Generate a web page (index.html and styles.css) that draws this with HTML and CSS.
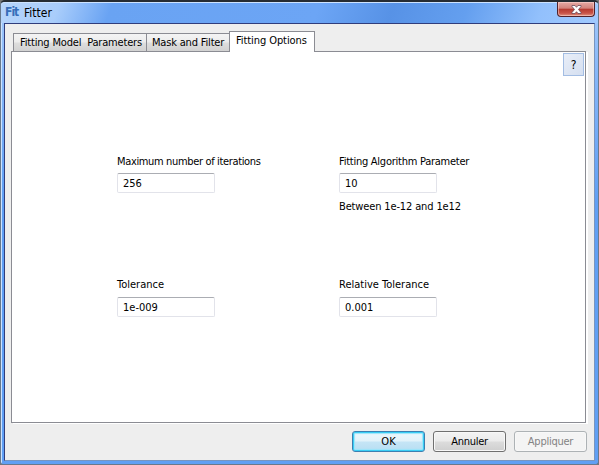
FILE: index.html
```html
<!DOCTYPE html>
<html lang="en">
<head>
<meta charset="utf-8">
<title>Fitter</title>
<link rel="stylesheet" href="styles.css">
</head>
<body>
<div class="window">
  <header class="titlebar">
    <span class="logo">Fit</span>
    <span class="title">Fitter</span>
    <button class="close" aria-label="Close">
      <svg width="11" height="9" viewBox="0 0 11 9"><path d="M1 .5h3L5.500 2.300 7 .5h3v1L7.500 4.500 10 7.500v1H7L5.500 6.700 4 8.500H1v-1L3.500 4.500 1 1.500z" fill="#fff" stroke="#694a5a" stroke-width=".8"/></svg>
    </button>
  </header>
  <main class="client">
    <nav class="tabs">
      <div class="tab tab-model">Fitting Model&nbsp; Parameters</div>
      <div class="tab tab-mask">Mask and Filter</div>
      <div class="tab tab-options active">Fitting Options</div>
    </nav>
    <section class="panel">
      <button class="help">?</button>
      <div class="fields">
        <div class="field">
          <label for="iter" class="l-iter">Maximum number of iterations</label>
          <input id="iter" value="256">
        </div>
        <div class="field">
          <label for="param" class="l-param">Fitting Algorithm Parameter</label>
          <input id="param" value="10">
          <p class="hint">Between 1e-12 and 1e12</p>
        </div>
        <div class="field lower">
          <label for="tol">Tolerance</label>
          <input id="tol" value="1e-009">
        </div>
        <div class="field lower">
          <label for="rel">Relative Tolerance</label>
          <input id="rel" value="0.001">
        </div>
      </div>
    </section>
    <footer class="actions">
      <button class="btn default">OK</button>
      <button class="btn">Annuler</button>
      <button class="btn disabled" disabled>Appliquer</button>
    </footer>
  </main>
</div>
</body>
</html>
```

FILE: styles.css
```css
* { box-sizing: border-box; }
body {
  margin: 0;
  background: #777;
  overflow: hidden;
}
body, button, input {
  font-family: Tahoma, "DejaVu Sans Condensed", "Noto Sans", sans-serif;
  font-size: 11px;
  color: #000;
}
.window {
  width: 599px;
  height: 465px;
  padding: 0 3px 3px;
  border: 1px solid #68798d;
  border-top: 2px solid #262c33;
  border-radius: 5px 5px 3px 3px;
  background: linear-gradient(#a3c9fb 0, #83b5f8 80px, #609ff4 200px);
  box-shadow: inset 1px 1px #cde3ff;
}
.titlebar {
  display: flex;
  height: 21px;
  margin: 0 -3px;
  padding-left: 4px;
  background: linear-gradient(110deg, #b6d4fa 0, #a9cdfb 55px, #69a3f3 105px, #6ca5f5 300px, #5792e6 370px, #649fef 440px, #92c0fc 510px, #a1caff 100%);
  border-top: 1px solid #cde3ff;
  border-radius: 4px 4px 0 0;
}
.logo {
  width: 19px;
  padding-top: 2px;
  font: bold 12px/15px "DejaVu Sans Condensed", sans-serif;
  letter-spacing: -1px;
  color: #376eb9;
}
.title {
  padding-top: 2px;
  font-size: 12px;
  line-height: 16px;
}
.close {
  display: flex;
  align-items: center;
  justify-content: center;
  width: 38px;
  height: 15px;
  margin: -1px 3px 0 auto;
  padding: 0;
  border: 1px solid #50222c;
  border-top: 0;
  border-radius: 0 0 4px 4px;
  background: linear-gradient(#e6aaa5 0, #d3827b 45%, #b53a30 50%, #c95449 80%, #e09584 100%);
  box-shadow: inset 0 0 0 1px rgba(255,220,215,.5);
}
.client {
  height: 438px;
  padding: 7px 7px 0 6px;
  border: 1px solid #7895bf;
  border-top: 1px solid #303d7c;
  border-left-color: #303d7c;
  background: #eee;
}
.tabs {
  display: flex;
  align-items: flex-end;
  height: 21px;
  margin: 0 0 -1px 2px;
  position: relative;
}
.tab {
  height: 19px;
  border: 1px solid #8b8c93;
  border-right: 0;
  background: linear-gradient(#f4f4f4, #ececec 48%, #dedede 52%, #d2d2d2);
  line-height: 18px;
  white-space: nowrap;
  padding-left: 6px;
  letter-spacing: -.18px;
}
.tab-model { width: 133px; }
.tab-mask { width: 83px; padding-left: 5px; }
.tab-options { width: 86px; letter-spacing: -.08px; }
.tab.active {
  height: 21px;
  border-right: 1px solid #8b8c93;
  border-bottom: 0;
  background: #fff;
}
.panel {
  height: 372px;
  margin-right: 1px;
  border: 1px solid #8b8c93;
  background: #fff;
  box-shadow: 2px 1px #fff;
}
.help {
  display: block;
  width: 21px;
  height: 23px;
  margin: 1px 1px 0 auto;
  padding: 0;
  border: 1px solid #a3bde3;
  background: linear-gradient(135deg, #e9eef8, #d5dff0);
  font-size: 12px;
}
.fields {
  display: grid;
  grid-template-columns: 222px 160px;
  grid-template-rows: 123px 60px;
  padding: 79px 0 0 105px;
}
label, .hint {
  display: block;
  height: 18px;
  line-height: 14px;
  margin: 0;
  white-space: nowrap;
}
.lower label { height: 19px; }
.l-iter { letter-spacing: -.35px; }
.l-param { letter-spacing: -.25px; }
input {
  display: block;
  width: 98px;
  height: 20px;
  padding: 0 5px;
  border: 1px solid #e2e3ea;
  border-top-color: #abadb3;
  border-radius: 2px;
  background: #fff;
}
.hint {
  margin-top: 7px;
  letter-spacing: -.14px;
}
.actions {
  display: flex;
  justify-content: flex-end;
  gap: 8px;
  margin-top: 8px;
}
.btn {
  width: 73px;
  height: 21px;
  padding: 0;
  border: 1px solid #707070;
  border-radius: 3px;
  background: linear-gradient(#f3f3f3, #ebebeb 48%, #dcdcdc 52%, #cfcfcf);
  box-shadow: inset 0 0 0 1px #f8f8f8;
  letter-spacing: -.25px;
}
.btn.default {
  border-color: #3c7fb1;
  background: linear-gradient(#eef7fb, #e2f2fa 48%, #c5e5f6 52%, #b8def2);
  box-shadow: inset 0 0 0 1px #39cdf4, inset 0 0 1px 2px #9ce5fb;
  letter-spacing: 0;
}
.btn.disabled {
  border-color: #adb2b5;
  background: #f4f4f4;
  color: #838383;
}
```
